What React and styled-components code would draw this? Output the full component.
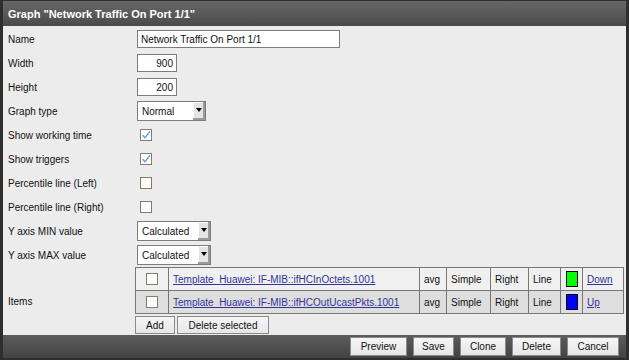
import React from "react"
import styled, { createGlobalStyle } from "styled-components"

const GlobalStyle = createGlobalStyle`
  html, body {
    margin: 0;
    padding: 0;
    background: #2b2b2b;
  }
  body {
    font-family: "Liberation Sans", Arial, sans-serif;
    font-size: 10px;
    color: #111;
  }
`

const Frame = styled.div`
  width: 629px;
  height: 360px;
  box-sizing: border-box;
  border-style: solid;
  border-color: #2e2e2e;
  border-width: 1px 3px 2px 3px;
  display: flex;
  flex-direction: column;
  background: #ececec;
`

const Header = styled.div`
  height: 25px;
  flex: none;
  display: flex;
  align-items: center;
  padding-left: 5px;
  background: linear-gradient(#666 0%, #5a5a5a 50%, #4a4a4a 100%);
  color: #fff;
  font-weight: bold;
  font-size: 11px;
`

const Body = styled.div`
  flex: 1;
  padding-top: 1px;
  background: #ececec;
`

const Row = styled.div`
  display: grid;
  grid-template-columns: 132px 1fr;
  align-items: center;
  min-height: 24px;
`

const Label = styled.div`
  padding-left: 5px;
`

const Field = styled.div`
  display: flex;
  align-items: center;
`

const TextInput = styled.div`
  box-sizing: border-box;
  margin-left: 2px;
  width: ${p => p.$w}px;
  height: 18px;
  border: 1px solid #7c7c7c;
  background: #fff;
  display: flex;
  align-items: center;
  justify-content: ${p => (p.$right ? "flex-end" : "flex-start")};
  padding: 0 3px;
  font-size: 10px;
`

const Select = styled.div`
  box-sizing: border-box;
  margin-left: 2px;
  width: ${p => p.$w}px;
  height: 20px;
  border: 1px solid #7c7c7c;
  background: #fff;
  display: flex;
  align-items: center;
  padding-left: 4px;
  position: relative;
`

const SelectArrow = styled.span`
  position: absolute;
  right: 0;
  top: 0;
  bottom: 0;
  width: 12px;
  background: #e4e4e4;
  box-shadow: inset -2px -2px 0 #9a9a9a, inset 1px 1px 0 #fff;
  display: flex;
  align-items: center;
  justify-content: center;

  &::after {
    content: "";
    margin: -3px 1px 0 0;
    border-left: 3px solid transparent;
    border-right: 3px solid transparent;
    border-top: 4px solid #000;
  }
`

const Box = styled.span`
  box-sizing: border-box;
  display: inline-flex;
  align-items: center;
  justify-content: center;
  width: 12px;
  height: 12px;
  margin-left: ${p => p.$ml ?? 5}px;
  border: 1px solid #857a6c;
  background: #fff;
  vertical-align: middle;
`

const Check = ({ checked, ml }) => (
  <Box $ml={ml}>
    {checked && (
      <svg width="10" height="10" viewBox="0 0 10 10">
        <path d="M1.5 5.2 L4 7.8 L8.8 1.5" fill="none" stroke="#5b9de3" strokeWidth="1.4" />
      </svg>
    )}
  </Box>
)

const ItemsBlock = styled.div`
  display: flex;
  flex-direction: column;
  gap: 2px;
  padding: 0 0 1px;
`

const Table = styled.table`
  border-collapse: collapse;
  table-layout: fixed;
  width: 488px;
  font-size: 10px;

  td {
    border: 1px solid #777;
    height: 22px;
    padding: 0 4px;
    white-space: nowrap;
    overflow: hidden;
  }

  tr:nth-child(1) td {
    background: #f0f0f0;
  }
  tr:nth-child(2) td {
    background: #dedede;
  }
`

const CenterCell = styled.td`
  text-align: center;
`

const Link = styled.a`
  color: #33339a;
  text-decoration: underline;
`

const Swatch = styled.span`
  display: inline-block;
  width: 10px;
  height: 14px;
  vertical-align: middle;
  border: 1px solid #000;
  background: ${p => p.$color};
`

const Buttons = styled.div`
  display: flex;
  gap: 2px;
`

const Button = styled.button`
  font-family: "Liberation Sans", Arial, sans-serif;
  font-size: 10px;
  color: #111;
  height: ${p => p.$h || 18}px;
  width: ${p => (p.$w ? `${p.$w}px` : "auto")};
  padding: 0 ${p => (p.$w ? 0 : 9)}px;
  border: 1px solid #8a8a8a;
  background: linear-gradient(#f6f6f6, #e6e6e6);
  border-radius: 0;
  cursor: pointer;
`

const Footer = styled.div`
  height: 23px;
  flex: none;
  display: flex;
  align-items: center;
  justify-content: flex-end;
  gap: 6px;
  padding-right: 7px;
  background: linear-gradient(#5c5c5c 0%, #4d4d4d 60%, #434343 100%);
`

const items = [
  { name: "Template_Huawei: IF-MIB::ifHCInOctets.1001", color: "#00ff00", side: "Down" },
  { name: "Template_Huawei: IF-MIB::ifHCOutUcastPkts.1001", color: "#0000ff", side: "Up" },
]

const colWidths = [33, 251, 27, 44, 38, 32, 22, 41]

export default function App() {
  return (
    <>
      <GlobalStyle />
      <Frame>
        <Header>Graph "Network Traffic On Port 1/1"</Header>
        <Body>
          <Row>
            <Label>Name</Label>
            <Field>
              <TextInput $w={203}>Network Traffic On Port 1/1</TextInput>
            </Field>
          </Row>
          <Row>
            <Label>Width</Label>
            <Field>
              <TextInput $w={40} $right>900</TextInput>
            </Field>
          </Row>
          <Row>
            <Label>Height</Label>
            <Field>
              <TextInput $w={40} $right>200</TextInput>
            </Field>
          </Row>
          <Row>
            <Label>Graph type</Label>
            <Field>
              <Select $w={69}>
                Normal
                <SelectArrow />
              </Select>
            </Field>
          </Row>
          <Row>
            <Label>Show working time</Label>
            <Field>
              <Check checked />
            </Field>
          </Row>
          <Row>
            <Label>Show triggers</Label>
            <Field>
              <Check checked />
            </Field>
          </Row>
          <Row>
            <Label>Percentile line (Left)</Label>
            <Field>
              <Check />
            </Field>
          </Row>
          <Row>
            <Label>Percentile line (Right)</Label>
            <Field>
              <Check />
            </Field>
          </Row>
          <Row>
            <Label>Y axis MIN value</Label>
            <Field>
              <Select $w={74}>
                Calculated
                <SelectArrow />
              </Select>
            </Field>
          </Row>
          <Row>
            <Label>Y axis MAX value</Label>
            <Field>
              <Select $w={74}>
                Calculated
                <SelectArrow />
              </Select>
            </Field>
          </Row>
          <Row>
            <Label>Items</Label>
            <ItemsBlock>
              <Table>
                <colgroup>
                  {colWidths.map((w, i) => (
                    <col key={i} style={{ width: w }} />
                  ))}
                </colgroup>
                <tbody>
                  {items.map(it => (
                    <tr key={it.name}>
                      <CenterCell>
                        <Check ml={0} />
                      </CenterCell>
                      <td>
                        <Link>{it.name}</Link>
                      </td>
                      <td>avg</td>
                      <td>Simple</td>
                      <td>Right</td>
                      <td>Line</td>
                      <CenterCell>
                        <Swatch $color={it.color} />
                      </CenterCell>
                      <td>
                        <Link>{it.side}</Link>
                      </td>
                    </tr>
                  ))}
                </tbody>
              </Table>
              <Buttons>
                <Button $w={40}>Add</Button>
                <Button $w={92}>Delete selected</Button>
              </Buttons>
            </ItemsBlock>
          </Row>
        </Body>
        <Footer>
          <Button $h={19} $w={57}>Preview</Button>
          <Button $h={19} $w={41}>Save</Button>
          <Button $h={19} $w={46}>Clone</Button>
          <Button $h={19} $w={49}>Delete</Button>
          <Button $h={19} $w={52}>Cancel</Button>
        </Footer>
      </Frame>
    </>
  )
}
